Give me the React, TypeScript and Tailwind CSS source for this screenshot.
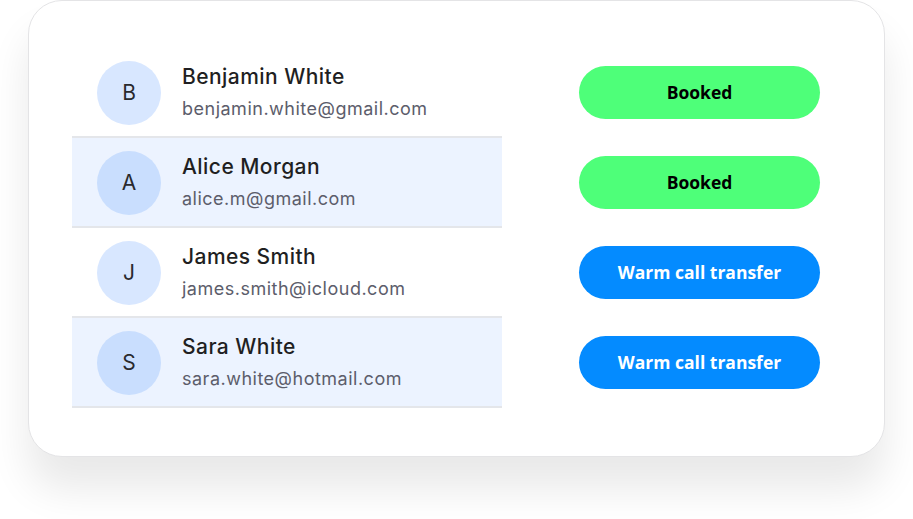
import React from "react";

type Row = { initial: string; name: string; email: string; status: "booked" | "warm"; shaded: boolean };

const rows: Row[] = [
  { initial: "B", name: "Benjamin White", email: "benjamin.white@gmail.com", status: "booked", shaded: false },
  { initial: "A", name: "Alice Morgan", email: "alice.m@gmail.com", status: "booked", shaded: true },
  { initial: "J", name: "James Smith", email: "james.smith@icloud.com", status: "warm", shaded: false },
  { initial: "S", name: "Sara White", email: "sara.white@hotmail.com", status: "warm", shaded: true },
];

export default function App() {
  return (
    <div className="w-[913px] h-[519px] bg-white overflow-hidden" style={{ fontFamily: "Inter, 'Noto Sans', sans-serif" }}>
      <div className="ml-[28px] w-[857px] h-[457px] bg-white border border-[#e4e4e6] rounded-[34px] shadow-[0_32px_40px_rgba(0,0,0,0.09)] pt-[47px] pl-[43px] pr-[64px] flex justify-between">
        <div className="w-[430px] flex flex-col">
          {rows.map((r) => (
            <div
              key={r.name}
              className={`h-[90px] flex items-center pl-[25px] border-b-2 border-[#e4e6ea] ${r.shaded ? "bg-[#ecf3ff]" : "bg-white"}`}
            >
              <div
                className={`mt-[2px] w-[64px] h-[64px] rounded-full flex items-center justify-center text-[21px] text-[#2a2a2e] ${r.shaded ? "bg-[#c9defe]" : "bg-[#d8e7ff]"}`}
              >
                {r.initial}
              </div>
              <div className="ml-[21px] flex flex-col">
                <div className="text-[21px] leading-[26px] text-[#1f1f22] font-medium tracking-[0.45px]">{r.name}</div>
                <div className="text-[18px] leading-[22px] mt-[8px] text-[#5c5d6b] tracking-[0.5px]">{r.email}</div>
              </div>
            </div>
          ))}
        </div>
        <div className="flex flex-col pt-[18px] gap-[37px]">
          {rows.map((r) => (
            <div
              key={r.name}
              className={`w-[241px] h-[53px] rounded-full flex items-center justify-center text-[17.5px] font-bold ${r.status === "booked" ? "bg-[#4eff79] text-black" : "bg-[#048bff] text-white"}`}
              style={{ fontFamily: "'Open Sans', 'Noto Sans', sans-serif" }}
            >
              {r.status === "booked" ? "Booked" : "Warm call transfer"}
            </div>
          ))}
        </div>
      </div>
    </div>
  );
}
